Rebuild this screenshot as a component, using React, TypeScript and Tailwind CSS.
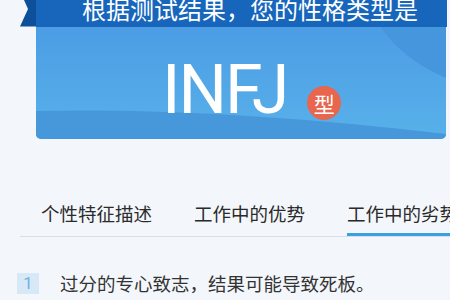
import React from "react";

const cjk = { fontFamily: '"Noto Sans CJK SC", "Noto Sans", sans-serif' };

export default function App() {
  return (
    <div className="w-[450px] h-[300px] overflow-hidden bg-[#f3f7fb]" style={cjk}>
      {/* Ribbon */}
      <div className="flex h-[27px] pl-[20px] pr-[3px]">
        <svg width="16" height="27" viewBox="0 0 16 27" className="shrink-0">
          <polygon points="4,0 16,0 16,26.5 0,26.5 8,9" fill="#0e4f9c" />
        </svg>
        <div className="flex-1 bg-[#1766bc] overflow-hidden pl-[46px]">
          <div className="text-[24px] leading-[24px] text-white whitespace-nowrap -mt-[3px]">
            根据测试结果，您的性格类型是
          </div>
        </div>
      </div>
      {/* Card */}
      <div className="relative ml-[36px] w-[410px] h-[112px] rounded-b-[5px] overflow-hidden bg-gradient-to-b from-[#4c9de4] to-[#58b1ea]">
        <svg className="absolute inset-0" width="410" height="112" viewBox="0 0 410 112">
          <circle cx="464" cy="-87" r="148" fill="#4596dd" />
          <path d="M0,84 Q180,80 410,107 L410,112 L0,112 Z" fill="#4797db" />
        </svg>
        <div className="relative flex items-start pl-[126px] pt-[29px]">
          <span
            className="text-white text-[68px] leading-[68px] tracking-[-2px]"
            style={{ fontFamily: 'Roboto, "Noto Sans", sans-serif' }}
          >
            INFJ
          </span>
          <span className="ml-[20px] mt-[30px] w-[34px] h-[34px] rounded-full bg-[#e8654e] text-white text-[21px] leading-[34px] text-center">
            型
          </span>
        </div>
      </div>
      {/* Tabs */}
      <div className="mt-[62px] ml-[20px] flex flex-nowrap border-b-[1.5px] border-[#dadfe5] text-[18.5px] leading-[24px] text-[#2a2a2a] whitespace-nowrap">
        <div className="px-[21px] shrink-0">
          <span className="block pb-[8px] border-b-[3px] border-transparent">个性特征描述</span>
        </div>
        <div className="px-[21px] shrink-0">
          <span className="block pb-[8px] border-b-[3px] border-transparent">工作中的优势</span>
        </div>
        <div className="pl-[21px] shrink-0">
          <span className="block pb-[8px] border-b-[3px] border-[#3c9fe2]">工作中的劣势</span>
        </div>
      </div>
      {/* List */}
      <div className="mt-[34px] ml-[17px] flex items-center">
        <span
          className="shrink-0 w-[22px] h-[21px] bg-[#d7e9f7] text-[#76b0df] text-[17px] leading-[21px] text-center"
          style={{ fontFamily: 'Roboto, sans-serif' }}
        >
          1
        </span>
        <span className="ml-[21px] text-[18.5px] leading-[24px] text-[#333] whitespace-nowrap">
          过分的专心致志，结果可能导致死板。
        </span>
      </div>
    </div>
  );
}
